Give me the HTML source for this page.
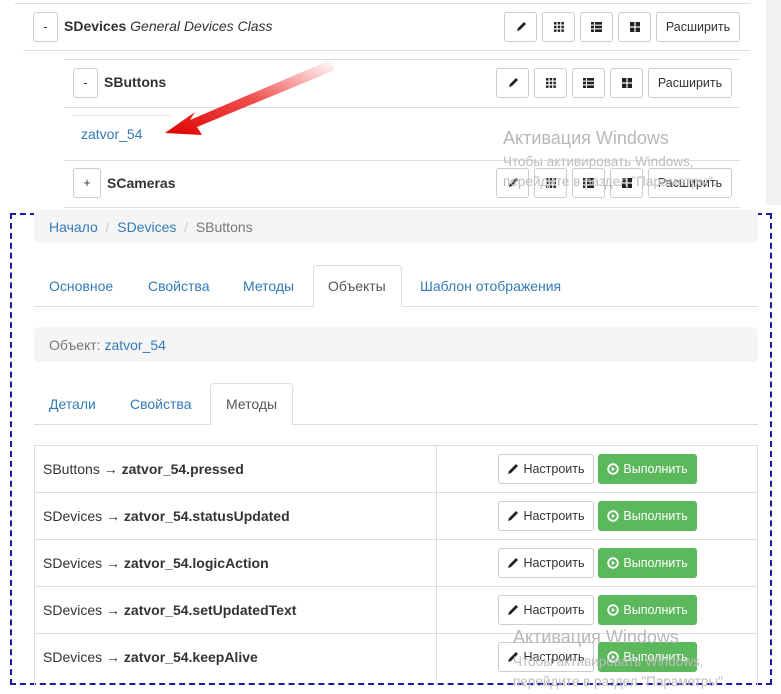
<!DOCTYPE html>
<html><head><meta charset="utf-8"><style>
*{box-sizing:border-box;margin:0;padding:0}
body{width:781px;height:694px;background:#fff;font-family:"Liberation Sans",Arial,sans-serif;font-size:14px;color:#333;position:relative;overflow:hidden}
.a{position:absolute}
.hl{position:absolute;height:1px;background:#ddd}
.btn{position:absolute;border:1px solid #ccc;border-radius:3px;background:#fff;display:flex;align-items:center;justify-content:center;font-size:12.5px;color:#333}
.blue{color:#337ab7}
.tab{position:absolute;font-size:14px;color:#337ab7}
.g{position:absolute;background:#5cb85c;border-radius:3px;color:#fff;font-size:12.5px;display:flex;align-items:center;justify-content:center}
.wm{position:absolute;color:#b8b8b8;font-size:18px}
.wm2{position:absolute;color:#bcbcbc;font-size:13.5px}
</style></head><body>
<div class="a" style="left:766px;top:0;width:15px;height:205px;background:#f1f1f1"></div>
<div class="hl" style="left:15px;top:3px;width:736px"></div>

<!-- SDevices row -->
<div class="btn" style="left:33px;top:12px;width:25px;height:30px">-</div>
<div class="a" style="left:64px;top:18px"><b>SDevices</b> <i>General Devices Class</i></div>
<div class="btn" style="left:504px;top:12px;width:33px;height:30px"><svg width="12" height="12" viewBox="0 0 12 12"><path d="M2 10 L3 7 L9 1 L11 3 L5 9 Z" fill="#222"/></svg></div>
<div class="btn" style="left:542px;top:12px;width:33px;height:30px"><svg width="10" height="10" viewBox="0 0 10 10" fill="#222"><rect x="0" y="0" width="2.5" height="2.5"/><rect x="3.7" y="0" width="2.5" height="2.5"/><rect x="7.4" y="0" width="2.5" height="2.5"/><rect x="0" y="3.7" width="2.5" height="2.5"/><rect x="3.7" y="3.7" width="2.5" height="2.5"/><rect x="7.4" y="3.7" width="2.5" height="2.5"/><rect x="0" y="7.4" width="2.5" height="2.5"/><rect x="3.7" y="7.4" width="2.5" height="2.5"/><rect x="7.4" y="7.4" width="2.5" height="2.5"/></svg></div>
<div class="btn" style="left:580px;top:12px;width:33px;height:30px"><svg width="11" height="10" viewBox="0 0 11 10" fill="#222"><rect x="0" y="0" width="3" height="2.6"/><rect x="4" y="0" width="7" height="2.6"/><rect x="0" y="3.7" width="3" height="2.6"/><rect x="4" y="3.7" width="7" height="2.6"/><rect x="0" y="7.4" width="3" height="2.6"/><rect x="4" y="7.4" width="7" height="2.6"/></svg></div>
<div class="btn" style="left:618px;top:12px;width:33px;height:30px"><svg width="10" height="10" viewBox="0 0 10 10" fill="#222"><rect x="0" y="0" width="4.4" height="4.4"/><rect x="5.6" y="0" width="4.4" height="4.4"/><rect x="0" y="5.6" width="4.4" height="4.4"/><rect x="5.6" y="5.6" width="4.4" height="4.4"/></svg></div>
<div class="btn" style="left:656px;top:12px;width:84px;height:30px">Расширить</div>
<div class="hl" style="left:23px;top:50px;width:727px"></div>
<div class="hl" style="left:64px;top:59px;width:676px"></div>

<!-- SButtons -->
<div class="btn" style="left:73px;top:68px;width:25px;height:30px">-</div>
<div class="a" style="left:104px;top:74px"><b>SButtons</b></div>
<div class="btn" style="left:496px;top:68px;width:33px;height:30px"><svg width="12" height="12" viewBox="0 0 12 12"><path d="M2 10 L3 7 L9 1 L11 3 L5 9 Z" fill="#222"/></svg></div>
<div class="btn" style="left:534px;top:68px;width:33px;height:30px"><svg width="10" height="10" viewBox="0 0 10 10" fill="#222"><rect x="0" y="0" width="2.5" height="2.5"/><rect x="3.7" y="0" width="2.5" height="2.5"/><rect x="7.4" y="0" width="2.5" height="2.5"/><rect x="0" y="3.7" width="2.5" height="2.5"/><rect x="3.7" y="3.7" width="2.5" height="2.5"/><rect x="7.4" y="3.7" width="2.5" height="2.5"/><rect x="0" y="7.4" width="2.5" height="2.5"/><rect x="3.7" y="7.4" width="2.5" height="2.5"/><rect x="7.4" y="7.4" width="2.5" height="2.5"/></svg></div>
<div class="btn" style="left:572px;top:68px;width:33px;height:30px"><svg width="11" height="10" viewBox="0 0 11 10" fill="#222"><rect x="0" y="0" width="3" height="2.6"/><rect x="4" y="0" width="7" height="2.6"/><rect x="0" y="3.7" width="3" height="2.6"/><rect x="4" y="3.7" width="7" height="2.6"/><rect x="0" y="7.4" width="3" height="2.6"/><rect x="4" y="7.4" width="7" height="2.6"/></svg></div>
<div class="btn" style="left:610px;top:68px;width:33px;height:30px"><svg width="10" height="10" viewBox="0 0 10 10" fill="#222"><rect x="0" y="0" width="4.4" height="4.4"/><rect x="5.6" y="0" width="4.4" height="4.4"/><rect x="0" y="5.6" width="4.4" height="4.4"/><rect x="5.6" y="5.6" width="4.4" height="4.4"/></svg></div>
<div class="btn" style="left:648px;top:68px;width:84px;height:30px">Расширить</div>
<div class="hl" style="left:64px;top:107px;width:676px"></div>
<div class="hl" style="left:73px;top:115px;width:97px;background:#e5e5e5"></div>
<div class="a blue" style="left:81px;top:126px">zatvor_54</div>
<div class="hl" style="left:64px;top:160px;width:676px"></div>

<!-- SCameras -->
<div class="btn" style="left:73px;top:168px;width:28px;height:30px">+</div>
<div class="a" style="left:107px;top:175px"><b>SCameras</b></div>
<div class="btn" style="left:496px;top:168px;width:33px;height:30px"><svg width="12" height="12" viewBox="0 0 12 12"><path d="M2 10 L3 7 L9 1 L11 3 L5 9 Z" fill="#222"/></svg></div>
<div class="btn" style="left:534px;top:168px;width:33px;height:30px"><svg width="10" height="10" viewBox="0 0 10 10" fill="#222"><rect x="0" y="0" width="2.5" height="2.5"/><rect x="3.7" y="0" width="2.5" height="2.5"/><rect x="7.4" y="0" width="2.5" height="2.5"/><rect x="0" y="3.7" width="2.5" height="2.5"/><rect x="3.7" y="3.7" width="2.5" height="2.5"/><rect x="7.4" y="3.7" width="2.5" height="2.5"/><rect x="0" y="7.4" width="2.5" height="2.5"/><rect x="3.7" y="7.4" width="2.5" height="2.5"/><rect x="7.4" y="7.4" width="2.5" height="2.5"/></svg></div>
<div class="btn" style="left:572px;top:168px;width:33px;height:30px"><svg width="11" height="10" viewBox="0 0 11 10" fill="#222"><rect x="0" y="0" width="3" height="2.6"/><rect x="4" y="0" width="7" height="2.6"/><rect x="0" y="3.7" width="3" height="2.6"/><rect x="4" y="3.7" width="7" height="2.6"/><rect x="0" y="7.4" width="3" height="2.6"/><rect x="4" y="7.4" width="7" height="2.6"/></svg></div>
<div class="btn" style="left:610px;top:168px;width:33px;height:30px"><svg width="10" height="10" viewBox="0 0 10 10" fill="#222"><rect x="0" y="0" width="4.4" height="4.4"/><rect x="5.6" y="0" width="4.4" height="4.4"/><rect x="0" y="5.6" width="4.4" height="4.4"/><rect x="5.6" y="5.6" width="4.4" height="4.4"/></svg></div>
<div class="btn" style="left:648px;top:168px;width:84px;height:30px">Расширить</div>
<div class="hl" style="left:64px;top:207px;width:676px"></div>

<div class="wm" style="left:503px;top:128px">Активация Windows</div>
<div class="wm2" style="left:503px;top:152px;line-height:20px">Чтобы активировать Windows,<br>перейдите в раздел "Параметры".</div>

<!-- arrow -->
<svg class="a" style="left:150px;top:55px" width="190" height="95" viewBox="0 0 190 95">
<defs><linearGradient id="ar" x1="1" y1="0" x2="0" y2="1"><stop offset="0" stop-color="#e33" stop-opacity="0"/><stop offset="0.5" stop-color="#e22" stop-opacity="0.8"/><stop offset="1" stop-color="#d00"/></linearGradient></defs>
<path d="M180 5 L40 65 L45 57 L15 78 L52 80 L47 72 L185 15 Z" fill="url(#ar)"/>
</svg>

<!-- dashed box -->
<div class="a" style="left:10px;top:213px;width:762px;height:472px;border:2px dashed #1a1aa8"></div>

<div class="a" style="left:34px;top:210px;width:724px;height:33px;background:#f5f5f5;border-radius:0 0 4px 4px"></div>
<div class="a" style="left:49px;top:219px"><span class="blue">Начало</span> <span style="color:#ccc">&nbsp;/&nbsp;</span> <span class="blue">SDevices</span> <span style="color:#ccc">&nbsp;/&nbsp;</span> <span style="color:#777">SButtons</span></div>

<div class="hl" style="left:34px;top:306px;width:724px"></div>
<div class="a" style="left:313px;top:265px;width:89px;height:42px;border:1px solid #ddd;border-bottom:none;border-radius:4px 4px 0 0;background:#fff"></div>
<div class="tab" style="left:49px;top:278px">Основное</div>
<div class="tab" style="left:148px;top:278px">Свойства</div>
<div class="tab" style="left:243px;top:278px">Методы</div>
<div class="tab" style="left:328px;top:278px;color:#555">Объекты</div>
<div class="tab" style="left:420px;top:278px">Шаблон отображения</div>

<div class="a" style="left:34px;top:327px;width:724px;height:35px;background:#f5f5f5;border-radius:4px"></div>
<div class="a" style="left:49px;top:337px;color:#777">Объект: <span class="blue">zatvor_54</span></div>

<div class="hl" style="left:34px;top:424px;width:724px"></div>
<div class="a" style="left:210px;top:383px;width:83px;height:42px;border:1px solid #ddd;border-bottom:none;border-radius:4px 4px 0 0;background:#fff"></div>
<div class="tab" style="left:49px;top:396px">Детали</div>
<div class="tab" style="left:130px;top:396px">Свойства</div>
<div class="tab" style="left:226px;top:396px;color:#555">Методы</div>

<div class="a" style="left:34px;top:445px;width:724px;height:240px;border:1px solid #ddd;border-bottom:none"></div>
<div class="a" style="left:436px;top:445px;width:1px;height:240px;background:#ddd"></div>

<div id="rows"></div>
<script>
var t=[["SButtons","pressed"],["SDevices","statusUpdated"],["SDevices","logicAction"],["SDevices","setUpdatedText"],["SDevices","keepAlive"]];
var h="";
for(var i=0;i<5;i++){var y=445+i*47;
if(i>0)h+='<div class="hl" style="left:34px;top:'+y+'px;width:724px"></div>';
h+='<div class="a" style="left:43px;top:'+(y+16)+'px">'+t[i][0]+' → <b>zatvor_54.'+t[i][1]+'</b></div>';
h+='<div class="btn" style="left:498px;top:'+(y+9)+'px;width:96px;height:30px"><svg width="12" height="12" viewBox="0 0 12 12" style="margin-right:4px"><path d="M1 11 L2 8 L9 1 L11 3 L4 10 Z" fill="#222"/></svg>Настроить</div>';
h+='<div class="g" style="left:598px;top:'+(y+9)+'px;width:99px;height:30px"><svg width="12" height="12" viewBox="0 0 12 12" style="margin-right:4px"><circle cx="6" cy="6" r="4.8" fill="none" stroke="#fff" stroke-width="1.8"/><path d="M4.8 3.8 L8 6 L4.8 8.2Z" fill="#fff"/></svg>Выполнить</div>';}
document.getElementById("rows").innerHTML=h;
</script>
<div class="wm" style="left:513px;top:627px">Активация Windows</div>
<div class="wm2" style="left:513px;top:652px;line-height:20px">Чтобы активировать Windows,<br>перейдите в раздел "Параметры".</div>
</body></html>
